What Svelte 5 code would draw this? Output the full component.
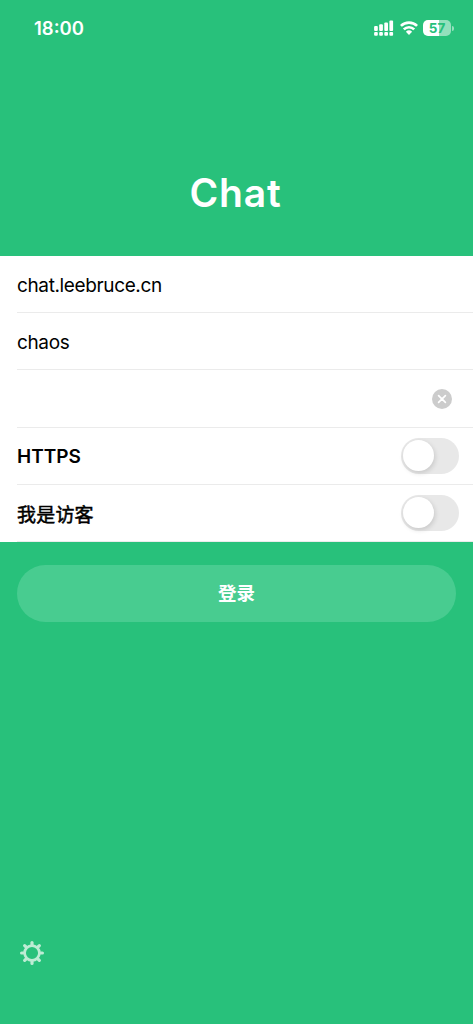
<script lang="ts">
  const fields = ['chat.leebruce.cn', 'chaos', ''];

  let switches = $state([
    { label: 'HTTPS', lang: 'en', on: false },
    { label: '我是访客', lang: 'zh', on: false },
  ]);

  const battery = 57;
  const teeth = [0, 45, 90, 135, 180, 225, 270, 315];
</script>

<div class="screen">
  <header class="status-bar">
    <span class="time">18:00</span>
    <div class="indicators">
      <svg class="signal" width="20" height="16" viewBox="0 0 20 16" fill="#fff">
        {#each [5, 6.7, 8.5, 10.5] as h, i}
          <rect x={i * 5.1 + 0.1} y={10.9 - h} width="3.7" height={h} rx="1" />
          <rect x={i * 5.1 + 0.1} y="12" width="3.7" height="3.8" rx="1" />
        {/each}
      </svg>
      <svg class="wifi" width="18" height="14" viewBox="0 0 18 14" fill="none" stroke="#fff" stroke-width="2.7">
        <path d="M.9 4.9a11.7 11.7 0 0 1 16.2 0" />
        <path d="M3.8 8.4a7.4 7.4 0 0 1 10.4 0" />
        <path d="M5.9 10.8a4.5 4.5 0 0 1 6.2 0L9 14z" fill="#fff" stroke="none" />
      </svg>
      <div class="battery">
        <div class="battery-body" style="--level: {battery}%">{battery}</div>
        <div class="battery-cap"></div>
      </div>
    </div>
  </header>

  <h1>Chat</h1>

  <main class="form">
    {#each fields as value}
      <div class="row">
        <span class="value">{value}</span>
        {#if !value}
          <button class="clear" aria-label="Clear">
            <svg width="20" height="20" viewBox="0 0 20 20">
              <circle cx="10" cy="10" r="10" fill="#ccc" />
              <path d="M6.6 6.6l6.8 6.8M13.4 6.6l-6.8 6.8" stroke="#fff" stroke-width="1.7" stroke-linecap="round" />
            </svg>
          </button>
        {/if}
      </div>
    {/each}
    {#each switches as item}
      <div class="row">
        <span class="label {item.lang}">{item.label}</span>
        <button
          class="switch"
          class:on={item.on}
          role="switch"
          aria-checked={item.on}
          aria-label={item.label}
          onclick={() => (item.on = !item.on)}
        >
          <span class="knob"></span>
        </button>
      </div>
    {/each}
  </main>

  <button class="login">登录</button>

  <button class="settings" aria-label="Settings">
    <svg width="24" height="24" viewBox="-12 -12 24 24" fill="none" stroke="#bdecd4">
      <circle r="7.4" stroke-width="2.7" />
      {#each teeth as angle}
        <path d="M0-8.5V-10.4" stroke-width="3.2" stroke-linecap="round" transform="rotate({angle})" />
      {/each}
    </svg>
  </button>
</div>

<style>
  :global(body) {
    margin: 0;
    background: #28c17b;
  }

  .screen {
    display: flex;
    flex-direction: column;
    box-sizing: border-box;
    width: 100%;
    height: 1024px;
    background: #28c17b;
    font-family: Inter, "Noto Sans CJK SC", sans-serif;
    overflow: hidden;
  }

  button {
    border: 0;
    padding: 0;
    background: none;
    font: inherit;
    cursor: pointer;
  }

  svg {
    display: block;
  }

  .status-bar {
    display: flex;
    align-items: center;
    justify-content: space-between;
    height: 56px;
    padding: 0 19px 0 34px;
    color: #fff;
  }

  .time {
    font-size: 18.5px;
    font-weight: 600;
  }

  .indicators {
    display: flex;
    align-items: center;
    gap: 6px;
  }

  .battery {
    display: flex;
    align-items: center;
    gap: 1px;
    margin-left: -1px;
  }

  .battery-body {
    width: 28px;
    height: 16px;
    border-radius: 5px;
    background: linear-gradient(to right, #fff var(--level), #94e0bd var(--level));
    color: #28c17b;
    font-size: 13.5px;
    font-weight: 700;
    line-height: 16px;
    text-align: center;
  }

  .battery-cap {
    width: 2px;
    height: 5px;
    border-radius: 0 2px 2px 0;
    background: #94e0bd;
  }

  h1 {
    height: 200px;
    margin: 0;
    box-sizing: border-box;
    padding: 113px 2px 0 0;
    color: #fff;
    font-size: 39px;
    font-weight: 600;
    line-height: 48px;
    letter-spacing: 0.8px;
    text-align: center;
  }

  .form {
    background: #fff;
  }

  .row {
    display: flex;
    align-items: center;
    justify-content: space-between;
    box-sizing: border-box;
    height: 57.2px;
    margin-left: 17px;
    padding-right: 14px;
    border-bottom: 1px solid #ebebeb;
    color: #000;
    font-size: 19px;
  }

  .value {
    padding-top: 2px;
    letter-spacing: -0.37px;
  }

  .label {
    padding-top: 1px;
    font-weight: 600;
  }

  /* Noto CJK has no medium cut here, so thicken the regular one */
  .label.zh {
    font-weight: 400;
    letter-spacing: 0.2px;
    -webkit-text-stroke: 0.5px #000;
  }

  .clear {
    margin: 1px 7px 0 auto;
  }

  .switch {
    display: flex;
    align-items: center;
    box-sizing: border-box;
    width: 58px;
    height: 36px;
    padding: 2px;
    border-radius: 18px;
    background: #e8e8e8;
  }

  .switch.on {
    justify-content: flex-end;
    background: #7adeac;
  }

  .knob {
    width: 31px;
    height: 31px;
    border-radius: 50%;
    background: #fff;
    box-shadow: 1px 2px 5px rgba(0, 0, 0, 0.14);
  }

  .login {
    height: 57px;
    margin: 23px 17px 0;
    padding-bottom: 2px;
    border-radius: 29px;
    background: #48cc90;
    color: #fff;
    font-size: 18.5px;
    font-weight: 700;
  }

  .settings {
    align-self: flex-start;
    margin: auto 0 59px 20px;
  }
</style>
